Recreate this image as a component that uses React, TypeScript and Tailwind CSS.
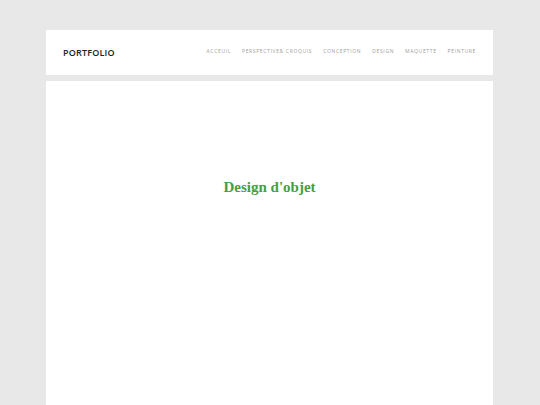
export default function App() {
  const nav = ["Acceuil", "Perspective& Croquis", "Conception", "Design", "Maquette", "Peinture"];
  return (
    <div className="min-h-[405px] h-[405px] overflow-hidden bg-[#e8e8e8] px-[46px] pt-[30px]" style={{ fontFamily: '"Open Sans", "Noto Sans", sans-serif' }}>
      <div className="w-[447px] flex flex-col gap-[6px]">
        <header className="h-[45px] bg-white flex items-center justify-between px-[17px]">
          <div className="text-[9px] font-semibold text-[#222] tracking-[0.02em]">PORTFOLIO</div>
          <nav className="flex items-center gap-[11px] -mt-px">
            {nav.map((n) => (
              <span key={n} className="text-[5px] uppercase tracking-[0.13em] text-[#a0a0a0]">{n}</span>
            ))}
          </nav>
        </header>
        <main className="h-[330px] bg-white flex justify-center pt-[95px]">
          <h1 className="text-[15px] font-bold text-[#43a043] h-fit" style={{ fontFamily: '"Liberation Serif", serif' }}>Design d'objet</h1>
        </main>
      </div>
    </div>
  );
}
